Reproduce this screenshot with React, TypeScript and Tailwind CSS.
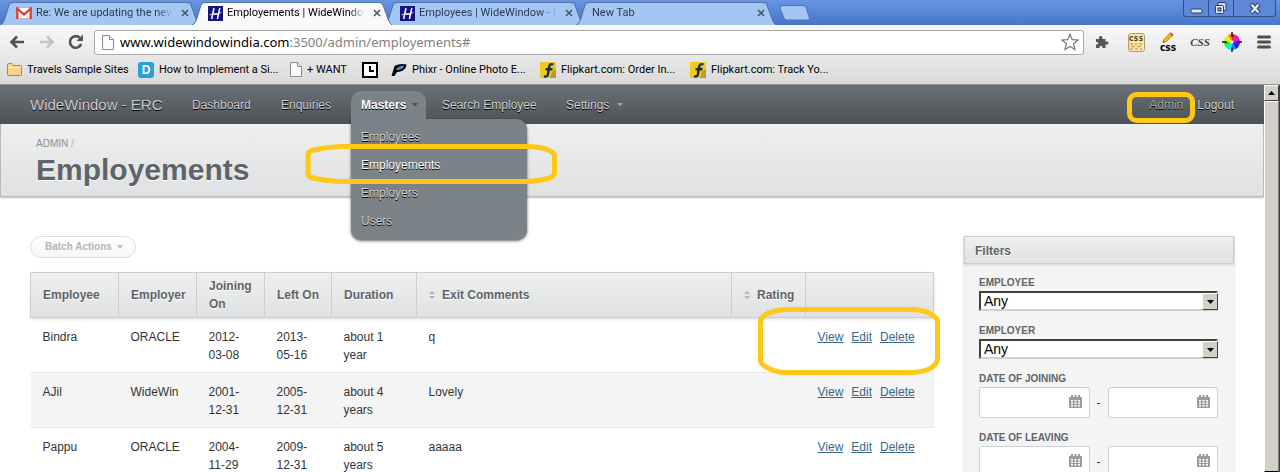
import React from "react";

const chromeFont = "font-[Roboto,sans-serif]";

function GmailIcon() {
  return (
    <svg width="16" height="12" viewBox="0 0 16 12" className="shrink-0">
      <rect x="0.5" y="0.5" width="15" height="11" fill="#fff" stroke="#d9aaa6" />
      <path d="M3 11.5 L7 6 M13 11.5 L9 6" stroke="#ddd" strokeWidth="1" />
      <path d="M1.3 12 V1.5 L8 7.6 L14.7 1.5 V12" fill="none" stroke="#d93a30" strokeWidth="2.2" />
    </svg>
  );
}

function HIcon() {
  return (
    <svg width="15" height="15" viewBox="0 0 15 15" className="shrink-0">
      <rect width="15" height="15" fill="#15127e" />
      <path d="M6 2 L3.6 13 M11.8 2 L9.4 13 M4.5 8 H11" stroke="#fff" strokeWidth="1.5" fill="none" />
      <path d="M1.5 9 L5 7.4 M10 7.6 L13.5 6.4" stroke="#fff" strokeWidth="0.8" fill="none" />
    </svg>
  );
}

function PageIcon() {
  return (
    <svg width="12" height="15" viewBox="0 0 12 15" className="shrink-0">
      <path d="M0.5 0.5 H7.5 L11.5 4.5 V14.5 H0.5 Z" fill="#fbfbfb" stroke="#8b8b8b" />
      <path d="M7.5 0.5 V4.5 H11.5" fill="#e5e5e5" stroke="#8b8b8b" />
    </svg>
  );
}

function FolderIcon() {
  return (
    <svg width="15" height="13" viewBox="0 0 15 13" className="shrink-0">
      <path d="M0.5 2 Q0.5 0.5 2 0.5 H5 L6.5 2.5 H13.5 Q14.5 2.5 14.5 3.5 V11.5 Q14.5 12.5 13.5 12.5 H1.5 Q0.5 12.5 0.5 11.5 Z" fill="#f9d48b" stroke="#b5853c" />
      <path d="M1.5 4.5 H13.5" stroke="#fdebc4" />
    </svg>
  );
}

function ClockIcon() {
  return (
    <svg width="16" height="16" viewBox="0 0 16 16" className="shrink-0">
      <rect x="1" y="1" width="14" height="14" fill="#fff" stroke="#000" strokeWidth="2" />
      <path d="M8 4 V9 H12" fill="none" stroke="#000" strokeWidth="2" />
    </svg>
  );
}

function PhixrIcon() {
  return (
    <svg width="16" height="14" viewBox="0 0 16 14" className="shrink-0">
      <path d="M0.5 13 L3.5 3 Q9 0 15.5 1.5 Q15 6 11 8 Q8 9 6 9 L3.5 13 Z" fill="#000" />
      <path d="M5 7.3 Q5.5 3.4 13.2 2.6 Q12 7 5 7.3 Z" fill="#3c9be0" />
    </svg>
  );
}

function FlipkartIcon() {
  return (
    <svg width="16" height="16" viewBox="0 0 16 16" className="shrink-0">
      <rect width="16" height="16" rx="1" fill="#f1c91c" />
      <path d="M12 10 L16 7 V16 H10 Z" fill="#b99b28" />
      <path d="M13.5 2.5 Q9.8 1 9.2 5 L8 12 Q7.4 15.4 4 14.3 M5.5 7.3 H12.5" stroke="#17323f" strokeWidth="2.4" fill="none" />
    </svg>
  );
}

function CloseIcon() {
  return (
    <svg width="8" height="8" viewBox="0 0 8 8">
      <path d="M1 1 L7 7 M7 1 L1 7" stroke="#4d5663" strokeWidth="1.6" />
    </svg>
  );
}

function Tab({ title, icon, active }: { title: string; icon?: React.ReactNode; active?: boolean }) {
  return (
    <div className={`relative -mr-2 flex h-6 w-50 min-w-0 items-center pr-[7px] pl-4 ${active ? "z-10" : ""}`}>
      <svg className="absolute inset-0 h-full w-full" viewBox="0 0 200 24" preserveAspectRatio="none">
        <path
          d="M0 24 C3 23 4 20 5 17 L9 4 Q10 1.5 13 1.5 H187 Q190 1.5 191 4 L196 18 Q198 23 200 24"
          fill={active ? "#f9fafb" : "#a4c6f5"}
          stroke="#54709d"
          strokeWidth="1"
        />
      </svg>
      <div className="relative flex min-w-0 flex-1 items-center gap-1">
        {icon}
        <span
          className={`min-w-0 flex-1 overflow-hidden whitespace-nowrap [mask-image:linear-gradient(to_right,#000_calc(100%-16px),transparent)] ${active ? "text-black" : "text-[#2d3a4d]"}`}
        >
          {title}
        </span>
        <button aria-label={`Close ${title}`} className="flex size-4 shrink-0 items-center justify-center">
          <CloseIcon />
        </button>
      </div>
    </div>
  );
}

function WindowButtons() {
  return (
    <div className="flex h-[17px] rounded-b-[3px] border border-t-0 border-[#2f4f8e] bg-[#5f89d6]">
      <button aria-label="Minimize" className="flex w-[25px] items-center justify-center border-r border-[#2f4f8e]">
        <svg width="13" height="14" viewBox="0 0 13 14">
          <rect x="1" y="8" width="11" height="4" rx="1" fill="#e3ebf8" stroke="#27406f" />
        </svg>
      </button>
      <button aria-label="Restore" className="flex w-[25px] items-center justify-center border-r border-[#2f4f8e]">
        <svg width="14" height="14" viewBox="0 0 14 14">
          <rect x="4" y="1.5" width="8" height="8" rx="1" fill="#cfdcf3" stroke="#27406f" />
          <rect x="1.5" y="4.5" width="8" height="8" rx="1" fill="#e3ebf8" stroke="#27406f" />
          <rect x="4" y="7" width="3" height="3" fill="#7396d8" stroke="#27406f" />
        </svg>
      </button>
      <button aria-label="Close" className="flex w-[41px] items-center justify-center">
        <svg width="14" height="14" viewBox="0 0 14 14">
          <path d="M3 3 L11 12 M11 3 L3 12" stroke="#27406f" strokeWidth="4.6" />
          <path d="M3.5 3.5 L10.5 11.5 M10.5 3.5 L3.5 11.5" stroke="#e3ebf8" strokeWidth="2.4" />
        </svg>
      </button>
    </div>
  );
}

const wheel = [
  ["#ff1744", "M10 10 L10 2 A8 8 0 0 1 14 3.1 Z"],
  ["#ff00a8", "M10 10 L14 3.1 A8 8 0 0 1 16.9 6 Z"],
  ["#d000ff", "M10 10 L16.9 6 A8 8 0 0 1 18 10 Z"],
  ["#5a00ff", "M10 10 L18 10 A8 8 0 0 1 16.9 14 Z"],
  ["#0018ff", "M10 10 L16.9 14 A8 8 0 0 1 14 16.9 Z"],
  ["#0090ff", "M10 10 L14 16.9 A8 8 0 0 1 10 18 Z"],
  ["#00e5ff", "M10 10 L10 18 A8 8 0 0 1 6 16.9 Z"],
  ["#00ff90", "M10 10 L6 16.9 A8 8 0 0 1 3.1 14 Z"],
  ["#20f000", "M10 10 L3.1 14 A8 8 0 0 1 2 10 Z"],
  ["#b8ff00", "M10 10 L2 10 A8 8 0 0 1 3.1 6 Z"],
  ["#ffe600", "M10 10 L3.1 6 A8 8 0 0 1 6 3.1 Z"],
  ["#ff7a00", "M10 10 L6 3.1 A8 8 0 0 1 10 2 Z"],
];

function Extensions() {
  return (
    <div className="flex items-center">
      <button aria-label="Extensions" className="flex w-9 justify-center">
        <svg width="14" height="14" viewBox="0 0 14 14" fill="#555">
          <path d="M1 4 H4.3 Q3.5 1 5.7 1 Q8 1 7.2 4 H10.5 V6.8 Q13.5 6 13.5 8 Q13.5 10.2 10.5 9.4 V13 H7.5 Q7.8 10.8 6 10.8 Q4.2 10.8 4.5 13 H1 V9.5 Q3.2 9.8 3.2 8.2 Q3.2 6.6 1 7 Z" />
        </svg>
      </button>
      <button aria-label="Stylesheet notes" className="flex w-8 justify-center">
        <span className="flex h-[19px] w-[17px] flex-col items-center rounded-[3px] border border-[#b59c60] bg-[#f5e7b2]">
          <span className="font-['DejaVu_Sans_Mono',monospace] text-[8px] leading-[9px] font-bold text-[#4b3b12]">css</span>
          <svg width="12" height="7" viewBox="0 0 12 7">
            <path d="M0 1 H3 M5 1 H7 M9 1 H12 M1 3.5 H5 M7 3.5 H11 M0 6 H3 M5 6 H8 M10 6 H12" stroke="#c8a860" strokeWidth="1.5" />
          </svg>
        </span>
      </button>
      <button aria-label="Edit CSS" className="flex w-8 flex-col items-center">
        <svg width="12" height="11" viewBox="0 0 12 11">
          <path d="M1 10.5 L2 7 L7.5 1.5 L10.5 4 L4.5 9.5 Z" fill="#f3b41f" stroke="#b47a10" strokeWidth=".6" />
          <path d="M7.5 1.5 L9 0.3 L11.7 2.7 L10.5 4 Z" fill="#d84e4e" />
          <path d="M1 10.5 L1.5 8.7 L2.8 9.9 Z" fill="#333" />
        </svg>
        <span className="font-['DejaVu_Sans_Condensed',sans-serif] text-[10px] leading-[9px] font-bold text-black">css</span>
      </button>
      <button aria-label="CSS viewer" className="w-8 text-center font-['Liberation_Serif',serif] text-[11px] leading-5 font-bold text-[#444] italic">
        CSS
      </button>
      <button aria-label="Color picker" className="flex w-8 justify-center">
        <svg width="20" height="20" viewBox="0 0 20 20">
          {wheel.map(([color, d]) => (
            <path key={color} d={d} fill={color} />
          ))}
          <path d="M10 0 V5 M10 15 V20 M0 10 H5 M15 10 H20" stroke="#111" strokeWidth="1.4" />
          <circle cx="10" cy="10" r="1.6" fill="#fff" />
        </svg>
      </button>
      <button aria-label="Menu" className="flex w-8 justify-center">
        <svg width="14" height="14" viewBox="0 0 14 14">
          <path d="M1.5 2 H12.5 M1.5 7 H12.5 M1.5 12 H12.5" stroke="#505050" strokeWidth="3" strokeLinecap="round" />
        </svg>
      </button>
    </div>
  );
}

const bookmarks = [
  { label: "Travels Sample Sites", icon: <FolderIcon />, cls: "w-[131px]" },
  {
    label: "How to Implement a Si...",
    icon: <span className="flex size-4 shrink-0 items-center justify-center rounded-[3px] bg-[#2a9fd9] font-['Liberation_Sans',sans-serif] text-xs leading-4 font-bold text-white">D</span>,
    cls: "w-[152px]",
  },
  { label: "+ WANT", icon: <PageIcon />, cls: "w-[72px]" },
  { label: "", icon: <ClockIcon />, cls: "w-[29px]" },
  { label: "Phixr - Online Photo E...", icon: <PhixrIcon />, cls: "w-[149px]" },
  { label: "Flipkart.com: Order In...", icon: <FlipkartIcon />, cls: "w-[150px]" },
  { label: "Flipkart.com: Track Yo...", icon: <FlipkartIcon />, cls: "w-[150px]" },
];

function BrowserChrome() {
  return (
    <div className={`shrink-0 text-[11px] leading-4 ${chromeFont}`}>
      <div className="flex h-[25px] items-start justify-between bg-linear-to-b from-[#6795e1] to-[#4776cb]">
        <div className="flex min-w-0 pt-px">
          <Tab title="Re: We are updating the new" icon={<GmailIcon />} />
          <Tab title="Employements | WideWindow" icon={<HIcon />} active />
          <Tab title="Employees | WideWindow - E" icon={<HIcon />} />
          <Tab title="New Tab" />
          <button aria-label="New tab" className="mt-1 ml-[11px] h-[15px]">
            <svg width="32" height="16" viewBox="0 0 32 16">
              <path d="M3 .5 H24 Q26 .5 27 2.5 L30.5 13 Q31 15 29 15 H8 Q6 15 5 13 L1 3 Q.5 .5 3 .5 Z" fill="#a4c6f5" stroke="#54709d" />
            </svg>
          </button>
        </div>
        <div className="pr-1">
          <WindowButtons />
        </div>
      </div>
      <div className="border-b border-[#8e9294] bg-linear-to-b from-[#f8f8f8] to-[#dadada]">
        <div className="flex h-[34px] items-center pl-[9px]">
          <button aria-label="Back" className="mr-[14px]">
            <svg width="16" height="14" viewBox="0 0 16 14">
              <path d="M15 7 H3 M8 1.5 L2.5 7 L8 12.5" fill="none" stroke="#505050" strokeWidth="2.6" />
            </svg>
          </button>
          <button aria-label="Forward" className="mr-[13px]">
            <svg width="16" height="14" viewBox="0 0 16 14">
              <path d="M1 7 H13 M8 1.5 L13.5 7 L8 12.5" fill="none" stroke="#c4c4c4" strokeWidth="2.6" />
            </svg>
          </button>
          <button aria-label="Reload" className="mr-[10px]">
            <svg width="16" height="16" viewBox="0 0 16 16">
              <path d="M13.2 10 A5.8 5.8 0 1 1 11.8 3.8" fill="none" stroke="#505050" strokeWidth="2.6" />
              <path d="M15 0.5 V7 H8.5 Z" fill="#505050" />
            </svg>
          </button>
          <div className="flex h-[25px] min-w-0 flex-1 items-center rounded-[3px] border border-[#a9a9a9] bg-white pr-1 pl-[7px]">
            <PageIcon />
            <div className="ml-[6px] flex-1 font-['Noto_Sans',sans-serif] text-[13px] leading-5 text-black">
              www.widewindowindia.com<span className="text-[#808080]">:3500/admin/employements#</span>
            </div>
            <button aria-label="Bookmark this page">
              <svg width="18" height="18" viewBox="0 0 18 18">
                <path d="M9 1.2 L11.2 6.6 L17 7 L12.6 10.8 L14 16.5 L9 13.4 L4 16.5 L5.4 10.8 L1 7 L6.8 6.6 Z" fill="#fff" stroke="#777" strokeWidth="1.2" />
              </svg>
            </button>
          </div>
          <Extensions />
        </div>
        <div className="flex h-[25px] items-center pb-1 pl-[7px] text-black">
          {bookmarks.map((b) => (
            <a key={b.label} href="#" aria-label={b.label || "Clock"} className={`flex items-center gap-[5px] whitespace-nowrap ${b.cls}`}>
              {b.icon}
              {b.label && <span>{b.label}</span>}
            </a>
          ))}
        </div>
      </div>
    </div>
  );
}

function Caret({ className }: { className: string }) {
  return (
    <svg width="6" height="4" viewBox="0 0 6 4" className={className}>
      <path d="M0 0 H6 L3 3.5 Z" fill="currentColor" />
    </svg>
  );
}

const textShade = "[text-shadow:0_1px_0_#000]";

function Nav() {
  return (
    <nav className={`flex h-[39px] items-center bg-linear-to-b from-[#6a7176] to-[#4d5256] pr-[30px] pl-[30px] text-[#cdcdcd] ${textShade}`}>
      <a href="#" className="w-[162px] text-[15px] whitespace-nowrap">WideWindow - ERC</a>
      <a href="#" className="w-[89px]">Dashboard</a>
      <a href="#" className="w-[70px]">Enquiries</a>
      <div className="relative h-[33px] w-[91px] self-end">
        <a href="#" className="relative z-20 flex h-[28px] w-[75px] items-center rounded-t-[10px] bg-[#7c8388] pl-[10px] font-bold text-white">
          Masters
          <Caret className="ml-[6px] text-[#4d5256]" />
        </a>
        <div className="absolute top-[28px] left-0 z-10 w-[176px] rounded-[10px] rounded-tl-none bg-[#7c8388] pt-1 pb-[5px] shadow-[0_1px_3px_rgba(0,0,0,0.6)]">
          <a href="#" className="block px-[10px] leading-7">Employees</a>
          <a href="#" className="relative block px-[10px] leading-7 text-white">
            Employements
            <svg className="pointer-events-none absolute -top-[9px] -left-[46px]" width="252" height="42" viewBox="0 0 252 42">
              <path d="M3 31 V13 Q3 9 9 8 Q22 5 36 4.500 H223 Q240 5 247 10 Q249.500 12 249.500 15 V31 Q249 35 243 36.500 Q232 39.500 218 39.500 H34 Q16 38 8 36 Q3 35 3 31 Z" fill="none" stroke="#fdc816" strokeWidth="5" />
            </svg>
          </a>
          <a href="#" className="block px-[10px] leading-7">Employers</a>
          <a href="#" className="block px-[10px] leading-7">Users</a>
        </div>
      </div>
      <a href="#" className="w-[124px]">Search Employee</a>
      <a href="#" className="flex items-center">
        Settings
        <Caret className="ml-2 text-[#9a9fa2]" />
      </a>
      <div className="ml-auto flex gap-[14px]">
        <a href="#" className="relative text-[#a5a5a5]">
          Admin
          <svg className="pointer-events-none absolute -top-[5px] -left-[22px]" width="68" height="31" viewBox="0 0 68 31">
            <rect x="2.500" y="2.500" width="63" height="26" rx="7" fill="none" stroke="#fdc816" strokeWidth="5" />
          </svg>
        </a>
        <a href="#">Logout</a>
      </div>
    </nav>
  );
}

const columns = [
  { label: "Employee", width: "w-[88px]" },
  { label: "Employer", width: "w-[78px]" },
  { label: "Joining On", width: "w-[68px]" },
  { label: "Left On", width: "w-[67px]" },
  { label: "Duration", width: "w-[85px]" },
  { label: "Exit Comments", width: "", sortable: true },
  { label: "Rating", width: "w-[74px]", sortable: true },
  { label: "", width: "w-[128px]" },
];

const rows = [
  ["Bindra", "ORACLE", "2012-03-08", "2013-05-16", "about 1 year", "q"],
  ["AJil", "WideWin", "2001-12-31", "2005-12-31", "about 4 years", "Lovely"],
  ["Pappu", "ORACLE", "2004-11-29", "2009-12-31", "about 5 years", "aaaaa"],
];

function SortIcon() {
  return (
    <svg width="6" height="8" viewBox="0 0 6 8" className="mr-[7px] shrink-0">
      <path d="M0 3 L3 0 L6 3 Z M0 5 L3 8 L6 5 Z" fill="#b0b2b4" />
    </svg>
  );
}

function EmployementsTable() {
  return (
    <table className="w-full table-fixed border-collapse leading-[18px]">
      <thead>
        <tr className="h-[45px] bg-linear-to-b from-[#efefef] to-[#dfe1e2] text-left text-[#5e6469] shadow-[0_1px_3px_rgba(0,0,0,0.15)] [text-shadow:0_1px_0_#fff]">
          {columns.map((c) => (
            <th key={c.label} className={`border border-[#cdcdcd] px-3 py-0 align-middle font-bold ${c.width}`}>
              <span className="flex items-center">
                {c.sortable && <SortIcon />}
                {c.label}
              </span>
            </th>
          ))}
        </tr>
      </thead>
      <tbody className="text-[#323537]">
        {rows.map((r, i) => (
          <tr key={r[0]} className="h-[55px] border-b border-[#e8e8e8] even:bg-[#f4f4f4]">
            {r.map((cell, j) => (
              <td key={j} className="px-3 pt-[10px] pb-2 align-top">{cell}</td>
            ))}
            <td />
            <td className="px-3 pt-[10px] pb-2 align-top text-[#38678b]">
              <div className="relative flex gap-2">
                <a href="#" className="underline">View</a>
                <a href="#" className="underline">Edit</a>
                <a href="#" className="underline">Delete</a>
                {i === 0 && (
                  <svg className="pointer-events-none absolute -top-[21px] -left-[60px]" width="182" height="68" viewBox="0 0 182 68">
                    <path d="M2.500 54 V14 Q3 9 12 5.500 Q20 2.500 30 2.500 H152 Q164 2.500 171 6 Q179.500 10 179.500 15 V52 Q179 58 171 62 Q163 65.500 152 65.500 H28 Q18 65.500 10 61 Q2.500 57 2.500 54 Z" fill="none" stroke="#fdc816" strokeWidth="5" />
                  </svg>
                )}
              </div>
            </td>
          </tr>
        ))}
      </tbody>
    </table>
  );
}

const fieldLabel = "block text-[10px] leading-4 font-bold text-[#5e6469]";

function FilterSelect({ id, label }: { id: string; label: string }) {
  return (
    <div className="mb-3">
      <label htmlFor={id} className={fieldLabel}>{label}</label>
      <div className="relative">
        <select
          id={id}
          className="block h-5 w-full appearance-none border-2 border-t-[#404040] border-r-[#d4d0c8] border-b-[#d4d0c8] border-l-[#404040] bg-white pl-[3px] text-sm leading-4 text-black"
        >
          <option>Any</option>
        </select>
        <span className="pointer-events-none absolute top-[2px] right-0 flex h-[17px] w-4 items-center justify-center border border-t-white border-r-[#404040] border-b-[#404040] border-l-white bg-[#d4d0c8] text-black">
          <svg width="7" height="4" viewBox="0 0 7 4">
            <path d="M0 0 H7 L3.500 4 Z" />
          </svg>
        </span>
      </div>
    </div>
  );
}

function DateInput({ label }: { label: string }) {
  return (
    <div className="relative min-w-0 flex-1">
      <input aria-label={label} className="block h-[31px] w-full rounded-[3px] border border-[#c9d0d6] bg-white px-2" />
      <svg className="pointer-events-none absolute top-2 right-2" width="13" height="13" viewBox="0 0 13 13">
        <path d="M0 2 H2 V0 H4 V2 H5.500 V0 H7.500 V2 H9 V0 H11 V2 H13 V13 H0 Z" fill="#9a9d9f" />
        <path d="M2 5 H4 V6.500 H2 Z M5.500 5 H7.500 V6.500 H5.500 Z M9 5 H11 V6.500 H9 Z M2 7.500 H4 V9 H2 Z M5.500 7.500 H7.500 V9 H5.500 Z M9 7.500 H11 V9 H9 Z M2 10 H4 V11.500 H2 Z M5.500 10 H7.500 V11.500 H5.500 Z M9 10 H11 V11.500 H9 Z" fill="#fff" />
      </svg>
    </div>
  );
}

function DateRange({ label }: { label: string }) {
  return (
    <fieldset className="mb-3">
      <legend className={fieldLabel}>{label}</legend>
      <div className="flex items-center">
        <DateInput label={`${label} from`} />
        <span className="w-[18px] text-center">-</span>
        <DateInput label={`${label} to`} />
      </div>
    </fieldset>
  );
}

function Filters() {
  return (
    <aside className="w-[270px] shrink-0 bg-[#f4f4f4] shadow-[0_1px_2px_rgba(0,0,0,0.2)]">
      <h3 className="h-7 border border-[#cdcdcd] bg-linear-to-b from-[#efefef] to-[#dfe1e2] px-[10px] leading-7 font-bold text-[#5e6469] shadow-[0_1px_3px_rgba(0,0,0,0.15)] [text-shadow:0_1px_0_#fff]">
        Filters
      </h3>
      <form className="pt-[11px] pr-4 pb-4 pl-[15px]">
        <FilterSelect id="employee" label="EMPLOYEE" />
        <FilterSelect id="employer" label="EMPLOYER" />
        <DateRange label="DATE OF JOINING" />
        <DateRange label="DATE OF LEAVING" />
      </form>
    </aside>
  );
}

function Scrollbar() {
  return (
    <div className="flex w-4 shrink-0 flex-col border-r border-[#404040] bg-[#d4d0c8]">
      <button aria-label="Scroll up" className="flex h-4 items-center justify-center border border-t-white border-r-[#404040] border-b-[#404040] border-l-white">
        <svg width="7" height="4" viewBox="0 0 7 4">
          <path d="M0 4 H7 L3.500 0 Z" />
        </svg>
      </button>
      <div className="flex-1 border border-t-white border-r-[#808080] border-l-white" />
    </div>
  );
}

export default function App() {
  return (
    <div className="flex h-screen flex-col overflow-hidden bg-white">
      <BrowserChrome />
      <div className="flex min-h-0 flex-1">
        <div className="min-w-0 flex-1 overflow-hidden font-['Liberation_Sans',Arial,sans-serif] text-xs text-[#323537]">
          <Nav />
          <header className="h-[73px] border border-t-0 border-[#b8babc] bg-linear-to-b from-[#efefef] to-[#dfe1e2] pt-[13px] pl-[35px] shadow-[0_1px_2px_rgba(0,0,0,0.25)]">
            <div className="text-[10px] leading-[14px] text-[#8a949e]">
              <a href="#">ADMIN</a> <span className="text-[#aab2ba]">/</span>
            </div>
            <h2 className="text-3xl leading-[38px] font-bold text-[#5e6469] [text-shadow:0_1px_0_#fff]">Employements</h2>
          </header>
          <div className="flex items-start gap-[30px] px-[30px] pt-[39px]">
            <main className="min-w-0 flex-1">
              <button className="mb-[14px] flex h-[22px] items-center rounded-full border border-[#dedede] bg-linear-to-b from-white to-[#f7f7f7] pr-3 pl-[14px] text-[10px] font-bold text-[#b4b6b8]">
                Batch Actions
                <Caret className="ml-[5px]" />
              </button>
              <EmployementsTable />
            </main>
            <Filters />
          </div>
        </div>
        <Scrollbar />
      </div>
    </div>
  );
}
